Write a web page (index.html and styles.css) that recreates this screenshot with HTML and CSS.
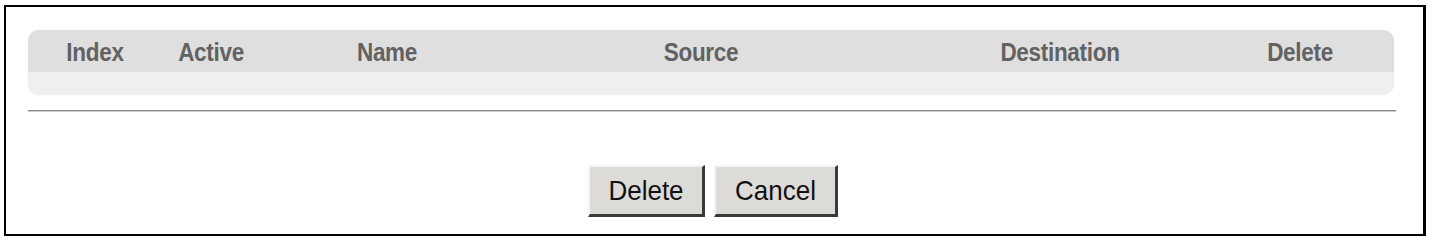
FILE: index.html
```html
<!DOCTYPE html>
<html>
<head>
<meta charset="utf-8">
<link rel="stylesheet" href="styles.css">
</head>
<body>
<div class="frame">
  <div class="table-head">
    <div class="head-row">
      <span class="c1"><b>Index</b></span>
      <span class="c2"><b>Active</b></span>
      <span class="c3"><b>Name</b></span>
      <span class="c4"><b>Source</b></span>
      <span class="c5"><b>Destination</b></span>
      <span class="c6"><b>Delete</b></span>
    </div>
    <div class="head-foot"></div>
  </div>
  <div class="rule"></div>
  <div class="actions">
    <button class="btn btn-delete"><span class="label">Delete</span></button>
    <button class="btn btn-cancel"><span class="label">Cancel</span></button>
  </div>
</div>
</body>
</html>
```

FILE: styles.css
```css
html, body {
  margin: 0;
  padding: 0;
  background: #ffffff;
}
body {
  width: 1432px;
  height: 240px;
  overflow: hidden;
  font-family: "Liberation Sans", Arial, sans-serif;
}
.frame {
  box-sizing: border-box;
  margin: 5px 6px 0 4px;
  height: 231px;
  border-style: solid;
  border-color: #000;
  border-width: 2px 3px 2px 2px;
  padding: 23px 29px 0 22px;
  display: flex;
  flex-direction: column;
}
.table-head {
  height: 65px;
  border-radius: 11px;
  overflow: hidden;
  display: flex;
  flex-direction: column;
  box-shadow: 0 0 3px rgba(0,0,0,0.04);
}
.head-row {
  height: 42px;
  background: #dfdfdf;
  display: grid;
  grid-template-columns: 134px 98px 254px 374px 344px 136px 1fr;
  align-items: center;
  font-weight: bold;
  font-size: 22.5px;
  color: #626262;
  letter-spacing: -0.3px;
}
.head-row span {
  text-align: center;
  padding-top: 3px;
}
.head-row b {
  display: inline-block;
  transform: scaleY(1.13);
}
.head-foot {
  flex: 1;
  background: #f0eeef;
}
.rule {
  margin-top: 15px;
  margin-right: -2px;
  height: 1px;
  background: #8a8a8a;
  border-bottom: 1px solid #cfcfcf;
}
.actions {
  margin-top: 53px;
  display: flex;
  justify-content: center;
  gap: 9px;
  padding-left: 4px;
}
.btn {
  box-sizing: border-box;
  height: 52px;
  background: #dcdbd8;
  font-family: "Liberation Sans", Arial, sans-serif;
  font-size: 26px;
  color: #111;
  border-style: solid;
  border-width: 2px 3px 3px 2px;
  border-color: #f4f4f4 #3a3a3a #3a3a3a #f4f4f4;
  padding: 0;
  margin: 0;
}
.btn .label {
  display: inline-block;
  transform: scaleY(1.08);
}
.btn-delete { width: 117px; }
.btn-cancel { width: 124px; }
```
